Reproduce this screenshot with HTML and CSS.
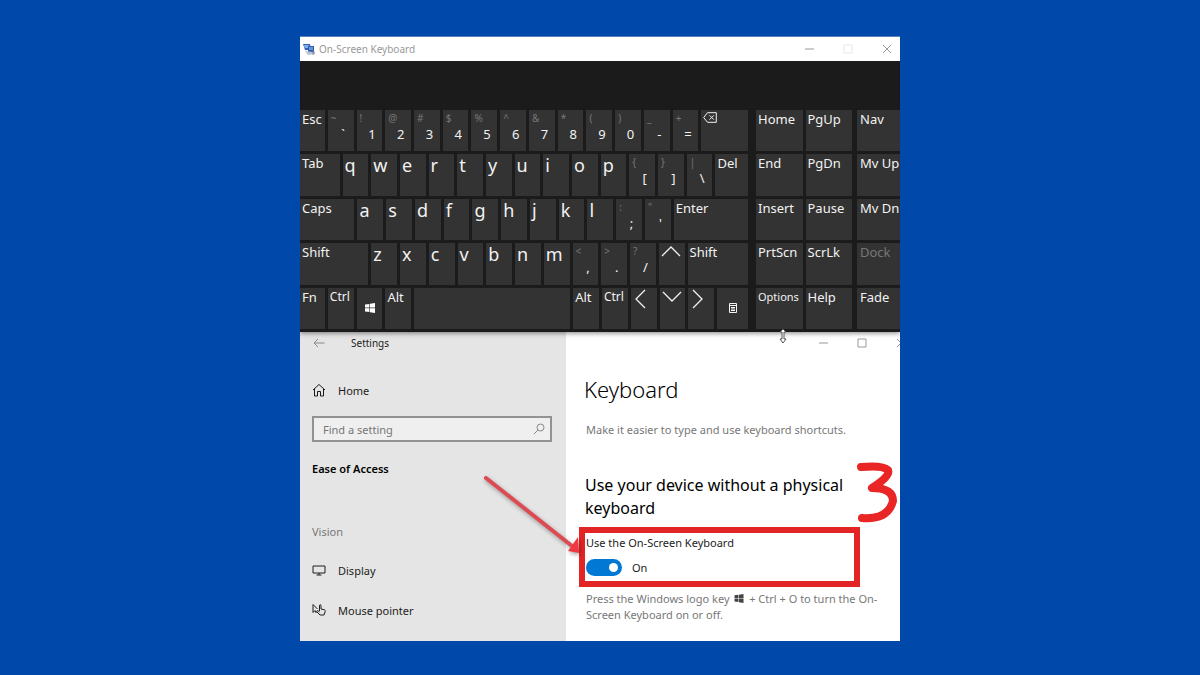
FILE: index.html
```html
<!DOCTYPE html>
<html lang="en">
<head>
<meta charset="utf-8">
<title>On-Screen Keyboard</title>
<link rel="stylesheet" href="styles.css">
</head>
<body>
<main class="stage">
  <section class="osk" aria-label="On-Screen Keyboard">
    <header class="osk-title">
      <svg class="osk-logo" viewBox="0 0 12 12" aria-hidden="true">
        <path d="M0 1l7 0 1 6-6 0z" fill="#2f5fb8"/><path d="M1 2l5 0 .6 3-5 0z" fill="#7db0ea"/>
        <path d="M5 3h6v6H5z" fill="#3459a8"/><path d="M6 4h4v3H6z" fill="#5f96e0"/>
        <path d="M2 8l8 1 1 2-6 1z" fill="#b9c3d6"/><path d="M10 8l2 1-1 3-2-1z" fill="#8794ad"/>
      </svg>
      <h1 class="osk-name">On-Screen Keyboard</h1>
      <button class="win-btn" aria-label="Minimize"><svg viewBox="0 0 10 10"><path d="M1 5h9"/></svg></button>
      <button class="win-btn faint" aria-label="Maximize" disabled><svg viewBox="0 0 10 10"><path d="M1 1h8v8H1z"/></svg></button>
      <button class="win-btn" aria-label="Close"><svg viewBox="0 0 10 10"><path d="M1 1l8 8M9 1l-8 8"/></svg></button>
    </header>
    <div class="keys">
      <div class="block main-block">
        <div class="row row-digits">
          <button class="key word">Esc</button>
          <button class="key dual"><span class="alt">~</span><span class="base">`</span></button>
          <button class="key dual"><span class="alt">!</span><span class="base">1</span></button>
          <button class="key dual"><span class="alt">@</span><span class="base">2</span></button>
          <button class="key dual"><span class="alt">#</span><span class="base">3</span></button>
          <button class="key dual"><span class="alt">$</span><span class="base">4</span></button>
          <button class="key dual"><span class="alt">%</span><span class="base">5</span></button>
          <button class="key dual"><span class="alt">^</span><span class="base">6</span></button>
          <button class="key dual"><span class="alt">&amp;</span><span class="base">7</span></button>
          <button class="key dual"><span class="alt">*</span><span class="base">8</span></button>
          <button class="key dual"><span class="alt">(</span><span class="base">9</span></button>
          <button class="key dual"><span class="alt">)</span><span class="base">0</span></button>
          <button class="key dual"><span class="alt">_</span><span class="base">-</span></button>
          <button class="key dual"><span class="alt">+</span><span class="base">=</span></button>
          <button class="key word" aria-label="Backspace"><svg class="backspace" viewBox="0 0 14 11"><path d="M4.500.7h8.800v9.600H4.500L.7 5.500zM6.500 3.300l4.400 4.400M10.900 3.300L6.500 7.700"/></svg></button>
        </div>
        <div class="row row-tab">
          <button class="key word">Tab</button>
          <button class="key letter">q</button><button class="key letter">w</button><button class="key letter">e</button><button class="key letter">r</button><button class="key letter">t</button><button class="key letter">y</button><button class="key letter">u</button><button class="key letter">i</button><button class="key letter">o</button><button class="key letter">p</button>
          <button class="key dual"><span class="alt">{</span><span class="base">[</span></button>
          <button class="key dual"><span class="alt">}</span><span class="base">]</span></button>
          <button class="key dual"><span class="alt">|</span><span class="base">\</span></button>
          <button class="key word">Del</button>
        </div>
        <div class="row row-caps">
          <button class="key word">Caps</button>
          <button class="key letter">a</button><button class="key letter">s</button><button class="key letter">d</button><button class="key letter">f</button><button class="key letter">g</button><button class="key letter">h</button><button class="key letter">j</button><button class="key letter">k</button><button class="key letter">l</button>
          <button class="key dual"><span class="alt">:</span><span class="base">;</span></button>
          <button class="key dual"><span class="alt">"</span><span class="base">'</span></button>
          <button class="key word">Enter</button>
        </div>
        <div class="row row-shift">
          <button class="key word">Shift</button>
          <button class="key letter">z</button><button class="key letter">x</button><button class="key letter">c</button><button class="key letter">v</button><button class="key letter">b</button><button class="key letter">n</button><button class="key letter">m</button>
          <button class="key dual"><span class="alt">&lt;</span><span class="base">,</span></button>
          <button class="key dual"><span class="alt">&gt;</span><span class="base">.</span></button>
          <button class="key dual"><span class="alt">?</span><span class="base">/</span></button>
          <button class="key word" aria-label="Up"><svg class="chev" viewBox="0 0 20 20"><path d="M1 12l9-9 9 9"/></svg></button>
          <button class="key word">Shift</button>
        </div>
        <div class="row row-space">
          <button class="key word">Fn</button>
          <button class="key word small">Ctrl</button>
          <button class="key glyph" aria-label="Windows"><svg class="winkey" viewBox="0 0 10 10"><path d="M0 1.500L4.400.9v3.700H0zM5 .8L10 0v4.600H5zM0 5.300h4.400V9L0 8.400zM5 5.300h5V10l-5-.8z"/></svg></button>
          <button class="key word">Alt</button>
          <button class="key word" aria-label="Space"></button>
          <button class="key word">Alt</button>
          <button class="key word small">Ctrl</button>
          <button class="key word" aria-label="Left"><svg class="chev" viewBox="0 0 20 20"><path d="M12 1L3 10l9 9"/></svg></button>
          <button class="key word" aria-label="Down"><svg class="chev" viewBox="0 0 20 20"><path d="M1 3l9 9 9-9"/></svg></button>
          <button class="key word" aria-label="Right"><svg class="chev" viewBox="0 0 20 20"><path d="M3 1l9 9-9 9"/></svg></button>
          <button class="key glyph" aria-label="Menu"><svg class="menukey" viewBox="0 0 8 10"><path d="M.5.500h7v9h-7zM.5 2.500h7M2 4.500h4M2 6h4M2 7.500h4"/></svg></button>
        </div>
      </div>
      <div class="block nav-block">
        <button class="key word">Home</button><button class="key word">PgUp</button>
        <button class="key word">End</button><button class="key word">PgDn</button>
        <button class="key word">Insert</button><button class="key word">Pause</button>
        <button class="key word">PrtScn</button><button class="key word">ScrLk</button>
        <button class="key word tiny">Options</button><button class="key word">Help</button>
      </div>
      <div class="block side-block">
        <button class="key word">Nav</button>
        <button class="key word">Mv Up</button>
        <button class="key word">Mv Dn</button>
        <button class="key word" disabled>Dock</button>
        <button class="key word">Fade</button>
      </div>
    </div>
    <svg class="cursor" viewBox="0 0 8 16" aria-hidden="true"><path d="M4 1L1 4h2v7H1l3 4 3-4H5V4h2z"/></svg>
  </section>

  <section class="settings" aria-label="Settings">
    <nav class="sidebar">
      <div class="side-title">
        <button class="back" aria-label="Back"><svg viewBox="0 0 12 10"><path d="M11.500 5H1M5 1L1 5l4 4"/></svg></button>
        <span>Settings</span>
      </div>
      <a class="nav-item home" href="#home">
        <svg viewBox="0 0 14 14"><path d="M1 7l6-5.500L13 7M2.500 6v7h3V8.500h3V13h3V6"/></svg>
        Home
      </a>
      <div class="search">
        <input type="search" placeholder="Find a setting" aria-label="Find a setting">
        <svg viewBox="0 0 12 12" aria-hidden="true"><circle cx="7.500" cy="4.500" r="3.500"/><path d="M5 7L1 11"/></svg>
      </div>
      <h2 class="side-heading">Ease of Access</h2>
      <h3 class="side-group">Vision</h3>
      <a class="nav-item display" href="#display">
        <svg viewBox="0 0 14 14"><path d="M1 3h12v7H1zM7 10v2M4.500 12h5"/></svg>
        Display
      </a>
      <a class="nav-item" href="#mouse">
        <svg viewBox="0 0 14 14"><path d="M1 1.500v8l2-2 1.300 2.500M1 1.500l4.500 4.500M7.500 8V2.200q.8-1 1.500 0V6l3.500.8q1 .4.700 1.700L12 12H8L4.500 8.500q.5-1.200 1.500-.6L7.500 9"/></svg>
        Mouse pointer
      </a>
    </nav>
    <article class="content">
      <div class="content-controls">
        <button class="win-btn" aria-label="Minimize"><svg viewBox="0 0 10 10"><path d="M1 5h9"/></svg></button>
        <button class="win-btn" aria-label="Maximize"><svg viewBox="0 0 10 10"><path d="M1 1h8v8H1z"/></svg></button>
        <button class="win-btn" aria-label="Close"><svg viewBox="0 0 10 10"><path d="M1 1l8 8M9 1l-8 8"/></svg></button>
      </div>
      <h2 class="page-title">Keyboard</h2>
      <p class="lead">Make it easier to type and use keyboard shortcuts.</p>
      <h3 class="section-title">Use your device without a physical keyboard</h3>
      <div class="callout">
        <label class="toggle-label" for="osk-toggle">Use the On-Screen Keyboard</label>
        <div class="toggle-row">
          <input class="toggle" id="osk-toggle" type="checkbox" role="switch" checked>
          <span>On</span>
        </div>
      </div>
      <p class="hint">Press the Windows logo key <svg class="winlogo" viewBox="0 0 10 10" aria-hidden="true"><path d="M0 1.500L4.400.9v3.700H0zM5 .8L10 0v4.600H5zM0 5.300h4.400V9L0 8.400zM5 5.300h5V10l-5-.8z"/></svg> + Ctrl + O to turn the On-Screen Keyboard on or off.</p>
    </article>
    <svg class="arrow" viewBox="0 0 100 90" aria-hidden="true">
      <path class="arrow-line" d="M5 5L91 73"/><path class="arrow-head" d="M98 80L97 64L87 78z"/>
    </svg>
    <svg class="three" viewBox="0 0 42 62" aria-hidden="true"><path d="M4 5Q26 3 31 8Q34 14 15 26Q36 26 36 39Q31 58 5 56"/></svg>
  </section>
</main>
</body>
</html>
```
FILE: styles.css
```css
* { box-sizing: border-box; }

body {
  margin: 0;
  min-height: 100vh;
  padding: 36px 0 34px;
  background: #0049ab;
  font-family: "Noto Sans", "Open Sans", sans-serif;
  color: #1c1c1c;
}

h1, h2, h3, p { margin: 0; font-weight: 400; }
button { font: inherit; border: 0; padding: 0; background: none; color: inherit; }
svg { display: block; fill: none; stroke: currentColor; }

.stage { width: 50%; min-width: 600px; margin: 0 auto; }

/* On-screen keyboard */
.osk {
  position: relative;
  z-index: 1;
  background: #1b1b1b;
  border-top: 1px solid #5b7fb8;
  padding-bottom: 3px;
  box-shadow: 0 1px 5px rgba(0, 0, 0, .5);
  clip-path: inset(0 0 -16px 0);
}
.osk-title {
  display: flex;
  align-items: center;
  height: 24px;
  padding-left: 3px;
  background: #fff;
}
.osk-logo { width: 12px; height: 12px; stroke: none; }
.osk-name { flex: 1; margin-left: 4px; font-size: 10px; color: #999; }
.win-btn {
  display: flex;
  align-items: center;
  justify-content: center;
  width: 39px;
  height: 20px;
  flex: none;
  color: #999;
}
.osk-title .win-btn:last-child { margin-right: -6px; }
.win-btn svg { width: 10px; height: 10px; }
.win-btn.faint { color: #e8e8e8; }

.keys {
  display: grid;
  grid-template-columns: 448fr 99fr 43fr;
  column-gap: 5px;
  height: 268px;
  padding-top: 49px;
}
.block { display: grid; grid-auto-rows: minmax(0, 1fr); gap: 3px; min-width: 0; min-height: 0; }
.nav-block { grid-template-columns: 1fr 1fr; margin-left: 3px; }
.side-block { overflow: hidden; }
.row { display: grid; gap: 3px; min-width: 0; }
.row-digits { grid-template-columns: 25fr repeat(13, 26fr) 47fr; }
.row-tab { grid-template-columns: 40fr repeat(13, 26fr) 33fr; }
.row-caps { grid-template-columns: 55fr repeat(11, 26fr) 75fr; }
.row-shift { grid-template-columns: 69fr repeat(11, 26fr) 61fr; }
.row-space { grid-template-columns: 25fr repeat(3, 26fr) 157fr repeat(5, 26fr) 31fr; }

.key {
  display: flex;
  flex-direction: column;
  align-items: flex-start;
  min-width: 0;
  min-height: 0;
  padding-left: 3px;
  background: #333;
  color: #f2f2f2;
  white-space: nowrap;
}
.word { padding-left: 2px; font-size: 13px; line-height: 18px; }
.small { font-size: 12px; }
.tiny { font-size: 11px; }
.key:disabled { color: #777; }
.letter { padding-left: 2px; font-size: 18px; line-height: 22px; }
.dual { line-height: 16px; }
.alt { font-size: 10px; color: #777; }
.base { align-self: stretch; padding-left: 2px; text-align: center; font-size: 13px; }
.glyph { align-items: center; justify-content: center; padding: 0; }
.side-block .word { padding-left: 3px; }
.backspace { width: 14px; height: 11px; margin-top: 2px; }
.chev { width: 20px; height: 20px; margin-top: 1px; stroke-width: 1.3; }
.winkey { width: 10px; height: 10px; fill: #fff; stroke: none; }
.menukey { width: 8px; height: 10px; }
.cursor {
  position: absolute;
  left: 80%;
  bottom: -12px;
  width: 8px;
  height: 16px;
  margin-left: -1px;
  fill: #fff;
  stroke: #555;
}

/* Settings window */
.settings {
  position: relative;
  display: flex;
  height: 309px;
  overflow: hidden;
  background: #fff;
}
.sidebar {
  flex: 0 0 266px;
  padding: 1px 14px 0 12px;
  background: #e5e5e5;
  font-size: 11px;
}
.side-title { display: flex; align-items: center; height: 20px; gap: 26px; padding-left: 1px; font-size: 10px; }
.back { color: #888; }
.back svg { width: 12px; height: 10px; }
.nav-item {
  display: flex;
  align-items: center;
  gap: 12px;
  height: 20px;
  color: inherit;
  text-decoration: none;
}
.nav-item svg { width: 14px; height: 14px; }
.home { margin-top: 27px; }
.search {
  display: flex;
  align-items: center;
  height: 26px;
  margin-top: 16px;
  padding: 0 5px 0 9px;
  border: 2px solid #929292;
  background: #efefef;
  color: #888;
}
.search input {
  flex: 1;
  min-width: 0;
  padding: 0;
  border: 0;
  outline: 0;
  background: none;
  font: inherit;
}
.search input::placeholder { color: #767676; opacity: 1; }
.search svg { width: 12px; height: 12px; }
.side-heading { margin-top: 17px; font-size: 11px; line-height: 20px; font-weight: 600; color: #000; }
.side-group { margin-top: 43px; font-size: 11px; line-height: 20px; color: #777; }
.display { margin: 18px 0 20px; }

.content { flex: 1; min-width: 0; padding: 1px 0 0 13px; }
.content-controls { display: flex; justify-content: flex-end; margin-right: -20px; }
.page-title { margin: 20px 0 0 5px; font-size: 22px; line-height: 32px; font-weight: 300; color: #000; }
.lead { margin: 15px 0 0 7px; font-size: 11px; line-height: 20px; color: #777; }
.section-title {
  max-width: 270px;
  margin: 34px 0 0 6px;
  font-size: 16px;
  line-height: 23px;
  color: #000;
}
.callout {
  margin: 7px 40px 0 0;
  height: 60px;
  padding-left: 1px;
  border: 6px solid #e22424;
  font-size: 11px;
}
.toggle-label { display: block; line-height: 20px; }
.toggle-row { display: flex; align-items: center; gap: 10px; height: 28px; }
.toggle {
  display: flex;
  align-items: center;
  justify-content: flex-end;
  appearance: none;
  width: 36px;
  height: 17px;
  margin: 0;
  padding: 4px;
  border-radius: 9px;
  background: #0078d4;
}
.toggle::before { content: ""; width: 9px; height: 9px; border-radius: 50%; background: #fff; }
.hint { margin: 4px 10px 0 7px; font-size: 11px; line-height: 16px; color: #777; }
.winlogo { display: inline-block; width: 10px; height: 9px; margin: 0 2px; fill: #444; stroke: none; }

/* Hand-drawn marks lying over the settings window */
.arrow {
  position: absolute;
  left: 181px;
  top: 141px;
  width: 100px;
  height: 90px;
  filter: drop-shadow(1px 2px 2px rgba(0, 0, 0, .35));
}
.arrow-line { stroke: #dc4b52; stroke-width: 4; stroke-linecap: round; }
.arrow-head { fill: #ee3940; stroke: none; }
.three { position: absolute; right: 1px; top: 130px; width: 42px; height: 62px; }
.three path { stroke: #e92525; stroke-width: 8; stroke-linecap: round; stroke-linejoin: round; }
```
